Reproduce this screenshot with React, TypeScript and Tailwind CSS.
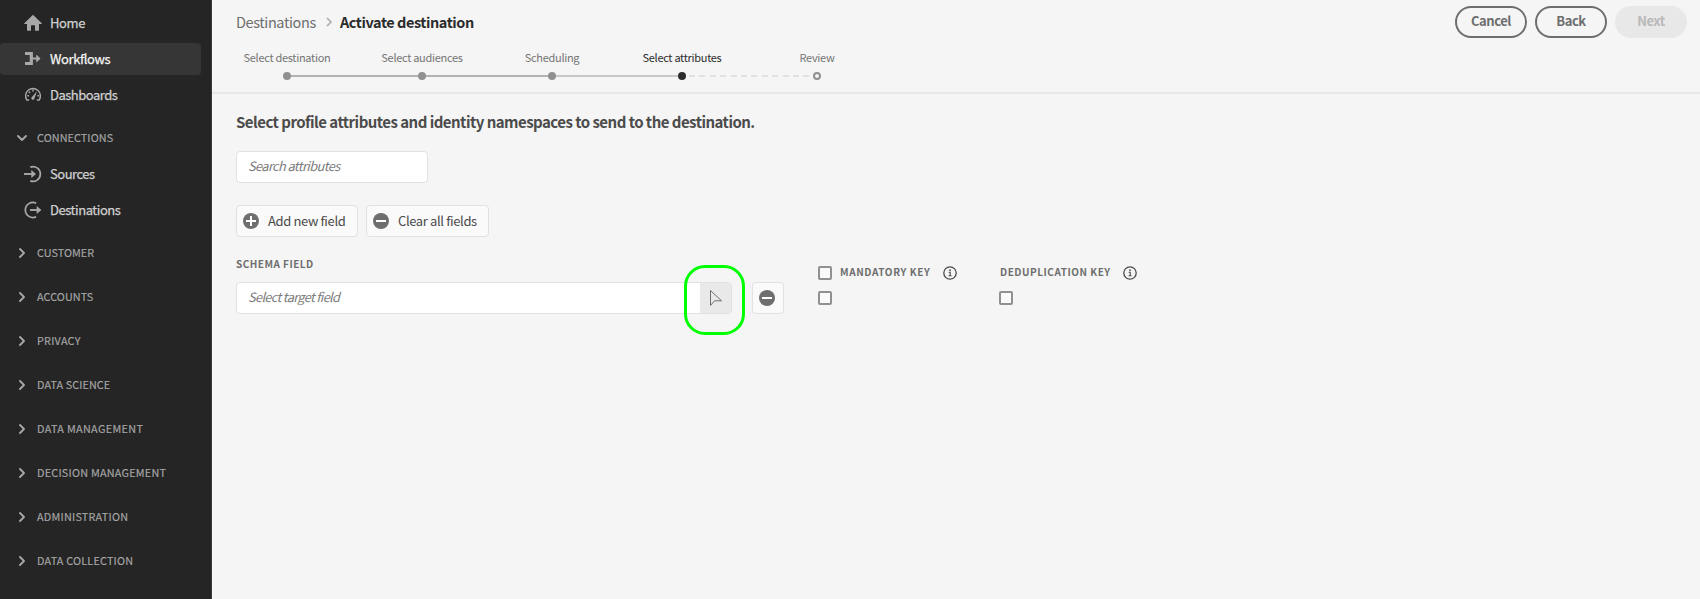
import type { ReactNode } from "react";

const HomeIcon = () => (
  <svg width="18" height="18" viewBox="0 0 18 18" fill="currentColor">
    <path d="M17.7 9.2 9.5 1.3a.7.7 0 0 0-1 0L.3 9.2a.4.4 0 0 0 .3.7H3v6.4c0 .3.2.5.5.5H7v-5c0-.3.2-.5.5-.5h3c.3 0 .5.2.5.5v5h3.500c.3 0 .5-.2.5-.5V9.900h2.400a.4.4 0 0 0 .3-.7z" />
  </svg>
);

const WorkflowIcon = () => (
  <svg width="18" height="18" viewBox="0 0 18 18" fill="currentColor">
    <path d="M1 2h7.900v5.600h3.300V5.400c0-.4.400-.6.700-.3l3.300 3.100c.2.200.2.500 0 .700l-3.300 3.100c-.3.300-.7.100-.7-.3V9.500H8.900v5.500H1v-3.100h4.700V5.100H1z" />
  </svg>
);

const DashboardIcon = () => (
  <svg width="18" height="18" viewBox="0 0 18 18" fill="none" stroke="currentColor">
    <path d="M2.700 13.800A7.400 7.400 0 1 1 15.300 13.800" strokeWidth="1.400" />
    <path d="M2.200 14h3M12.800 14h3" strokeWidth="1.400" />
    <path d="M3.300 9.700h1.700M13.400 9.700h1.700M9 3.600v1.800M4.800 5.700l1.300 1.200" strokeWidth="1.500" />
    <path d="M13.100 5.100 10.500 12.200a1.600 1.600 0 1 1-2.500-1.300z" fill="currentColor" stroke="none" />
  </svg>
);

const SourcesIcon = () => (
  <svg width="18" height="18" viewBox="0 0 18 18" fill="none" stroke="currentColor">
    <path d="M6.300 2.100A7.400 7.400 0 1 1 6.300 15.900" strokeWidth="1.700" />
    <path d="M0 9h8" strokeWidth="1.900" />
    <path d="M7.300 5v8l4.700-4z" fill="currentColor" stroke="none" />
  </svg>
);

const DestinationsIcon = () => (
  <svg width="18" height="18" viewBox="0 0 18 18" fill="none" stroke="currentColor">
    <path d="M12.200 2.300A7.500 7.500 0 1 0 12.200 15.700" strokeWidth="1.700" />
    <path d="M6 9h8" strokeWidth="1.900" />
    <path d="M12.700 5v8l4.700-4z" fill="currentColor" stroke="none" />
  </svg>
);

const Chevron = ({ down = false }: { down?: boolean }) => (
  <svg width="12" height="12" viewBox="0 0 12 12" fill="none" stroke="currentColor" strokeWidth="1.900" strokeLinecap="round" strokeLinejoin="round">
    <path d={down ? "M2 4l4 4 4-4" : "M4 2l4 4-4 4"} />
  </svg>
);

const CircleSign = ({ plus = false }: { plus?: boolean }) => (
  <svg className="shrink-0" width="16" height="16" viewBox="0 0 16 16">
    <circle cx="8" cy="8" r="8" fill="#6e6e6e" />
    <path d={plus ? "M3 8h10M8 3v10" : "M3 8h10"} stroke="#fff" strokeWidth="2" />
  </svg>
);

const InfoIcon = () => (
  <svg width="14" height="14" viewBox="0 0 14 14" fill="none" stroke="#4b4b4b">
    <circle cx="7" cy="7" r="6.200" strokeWidth="1.300" />
    <path d="M5.700 6.300h1.500v3.200M5.600 9.700h2.900" strokeWidth="1.100" />
    <circle cx="7" cy="4.200" r=".9" fill="#4b4b4b" stroke="none" />
  </svg>
);

const Checkbox = () => <span className="block size-3.5 shrink-0 rounded-[2px] border-2 border-[#909090] bg-[#fafafa]" />;

function NavItem({ icon, label, active = false, track }: { icon: ReactNode; label: string; active?: boolean; track: string }) {
  return (
    <a className={`flex h-8 w-[201px] items-center gap-2 pl-6 ${active ? "rounded bg-[#363636]" : ""}`}>
      <span className="text-[#a8a8a8]">{icon}</span>
      <span className={`whitespace-nowrap text-[13px] leading-5 [-webkit-text-stroke:0.25px] ${track} ${active ? "text-[#f5f5f5]" : "text-[#d0d0d0]"}`}>{label}</span>
    </a>
  );
}

function Section({ label, track, down = false }: { label: string; track: string; down?: boolean }) {
  return (
    <div className="flex h-11 items-center gap-[9px] pl-4 text-[#a6a6a6]">
      <Chevron down={down} />
      <span className={`whitespace-nowrap pb-0.5 text-[10.8px] leading-4 [-webkit-text-stroke:0.15px] ${track}`}>{label}</span>
    </div>
  );
}

const sections = [
  { label: "CUSTOMER", track: "tracking-[0.05px]" },
  { label: "ACCOUNTS", track: "tracking-[0.1px]" },
  { label: "PRIVACY", track: "tracking-[0.25px]" },
  { label: "DATA SCIENCE", track: "tracking-[0.1px]" },
  { label: "DATA MANAGEMENT", track: "tracking-[0.35px]" },
  { label: "DECISION MANAGEMENT", track: "tracking-[0.25px]" },
  { label: "ADMINISTRATION", track: "tracking-[0.25px]" },
  { label: "DATA COLLECTION", track: "tracking-[0.22px]" },
];

function Step({ label, width, dot, current = false }: { label: string; width: string; dot: string; current?: boolean }) {
  return (
    <div className={`flex shrink-0 flex-col items-center ${width}`}>
      <span className={`whitespace-nowrap text-[11px] leading-4 tracking-[-0.3px] ${current ? "text-[#2c2c2c]" : "text-[#747474]"}`}>{label}</span>
      <span className={`mt-[7px] size-2 rounded-full ${dot}`} />
    </div>
  );
}

export default function App() {
  return (
    <div className="flex h-[599px] w-[1700px] overflow-hidden bg-[#f5f5f5] font-['Noto_Sans_CJK_SC','Noto_Sans',sans-serif]">
      <nav className="w-[212px] shrink-0 border-r border-[#3a3a3a] bg-[#252525] pt-[7px]">
        <div className="flex flex-col gap-1">
          <NavItem icon={<HomeIcon />} label="Home" track="tracking-[-0.4px]" />
          <NavItem icon={<WorkflowIcon />} label="Workflows" active track="tracking-[-0.4px]" />
          <NavItem icon={<DashboardIcon />} label="Dashboards" track="tracking-[-0.5px]" />
        </div>
        <div className="mt-[5px]">
          <Section label="CONNECTIONS" track="tracking-[0.1px]" down />
        </div>
        <div className="mt-[-2px] flex flex-col gap-1">
          <NavItem icon={<SourcesIcon />} label="Sources" track="tracking-[-0.5px]" />
          <NavItem icon={<DestinationsIcon />} label="Destinations" track="tracking-[-0.45px]" />
        </div>
        <div className="mt-[5px]">
          {sections.map((s) => (
            <Section key={s.label} {...s} />
          ))}
        </div>
      </nav>

      <main className="flex-1">
        <header className="flex h-[94px] justify-between border-b-2 border-[#e8e8e8] pr-[13px] pt-[6px]">
          <div>
            <div className="flex h-8 items-center pl-6 leading-6">
              <span className="w-[80px] whitespace-nowrap text-[14.5px] tracking-[-0.4px] text-[#6e6e6e]">Destinations</span>
              <svg className="ml-[9px] mr-[7px]" width="8" height="10" viewBox="0 0 8 10" fill="none" stroke="#aaa" strokeWidth="1.600">
                <path d="M2 1l4 4-4 4" />
              </svg>
              <span className="whitespace-nowrap text-[14.5px] font-bold tracking-[-0.45px] text-[#2c2c2c]">Activate destination</span>
            </div>
            <div className="mt-[11px] flex items-end pl-[31px]">
              <Step label="Select destination" width="w-[88px]" dot="bg-[#909090]" />
              <span className="mb-[3px] ml-[-40px] h-0.5 w-[127px] bg-[#b3b3b3]" />
              <Step label="Select audiences" width="w-[88px] -ml-10" dot="bg-[#909090]" />
              <span className="mb-[3px] ml-[-40px] h-0.5 w-[122px] bg-[#b3b3b3]" />
              <Step label="Scheduling" width="w-[88px] -ml-10" dot="bg-[#909090]" />
              <span className="mb-[3px] ml-[-40px] h-0.5 w-[122px] bg-[#c8c8c8]" />
              <Step label="Select attributes" width="w-[88px] -ml-10" dot="bg-[#2c2c2c]" current />
              <span className="mb-[3px] ml-[-37px] h-0.5 w-[121px] bg-[repeating-linear-gradient(90deg,#e1e1e1_0_6px,transparent_6px_10.400px)]" />
              <Step label="Review" width="w-[88px] -ml-[37px]" dot="border-2 border-[#909090]" />
            </div>
          </div>
          <div className="flex gap-2 text-[13px] font-bold tracking-[-0.45px]">
            <button className="h-8 w-[72px] rounded-full border-2 border-[#6e6e6e] pb-0.5 text-[#6e6e6e]">Cancel</button>
            <button className="h-8 w-[72px] rounded-full border-2 border-[#6e6e6e] pb-0.5 text-[#6e6e6e]">Back</button>
            <button className="h-8 w-[72px] rounded-full bg-[#e8e8e8] pb-0.5 text-[#b8b8b8]">Next</button>
          </div>
        </header>

        <div className="pl-6 pt-4">
          <h1 className="h-6 whitespace-nowrap text-[15px] font-bold leading-6 tracking-[-0.53px] text-[#4b4b4b]">
            Select profile attributes and identity namespaces to send to the destination.
          </h1>
          <div className="mt-[17px] flex h-8 w-48 items-center rounded border border-[#e1e1e1] bg-white pb-0.5 pl-[11px] text-[12.8px] italic leading-5 tracking-[-0.61px] text-[#7c7c7c]">
            Search attributes
          </div>
          <div className="mt-[22px] flex gap-2 text-[13px] leading-5 tracking-[-0.37px] text-[#4b4b4b]">
            <button className="flex h-8 w-[122px] items-center gap-[9px] whitespace-nowrap rounded border border-[#e1e1e1] bg-[#fafafa] pb-px pl-1.5">
              <CircleSign plus />
              Add new field
            </button>
            <button className="flex h-8 w-[123px] items-center gap-[9px] whitespace-nowrap rounded border border-[#e1e1e1] bg-[#fafafa] pb-px pl-1.5">
              <CircleSign />
              Clear all fields
            </button>
          </div>
          <div className="flex text-[10px] font-bold text-[#6e6e6e]">
            <div className="w-[582px]">
              <div className="mt-[19px] h-4 leading-4 tracking-[0.48px]">SCHEMA FIELD</div>
              <div className="mt-[10px] flex gap-5">
                <div className="relative flex h-8 w-[496px] items-center justify-between rounded border border-[#e1e1e1] bg-white pl-[11px] text-[12.8px] font-normal italic tracking-[-0.67px] text-[#7c7c7c]">
                  <span className="pb-0.5 leading-5">Select target field</span>
                  <button className="flex h-full w-[31px] items-center justify-center rounded-r-[3px] bg-[#e9e9e9]">
                    <svg width="14" height="18" viewBox="0 0 14 18" fill="none" stroke="#6e6e6e" strokeWidth="1">
                      <path d="M1.500 1.500v15l4-4.700h7z" />
                    </svg>
                  </button>
                  <span className="absolute -top-[18px] left-[447px] h-[70px] w-[61px] rounded-[21px] border-[3px] border-[#00ff00]" />
                </div>
                <button className="flex size-8 items-center justify-center rounded border border-[#e1e1e1] bg-[#fafafa] pr-0.5">
                  <CircleSign />
                </button>
              </div>
            </div>
            <div className="w-[181px] pt-7">
              <div className="flex h-4 items-center">
                <Checkbox />
                <span className="ml-2 w-[103px] whitespace-nowrap pb-0.5 leading-4 tracking-[0.63px]">MANDATORY KEY</span>
                <InfoIcon />
              </div>
              <div className="mt-[10px]">
                <Checkbox />
              </div>
            </div>
            <div className="pt-7">
              <div className="flex h-4 items-center pb-px">
                <span className="ml-px w-[123px] whitespace-nowrap pb-px leading-4 tracking-[0.53px]">DEDUPLICATION KEY</span>
                <InfoIcon />
              </div>
              <div className="mt-[10px]">
                <Checkbox />
              </div>
            </div>
          </div>
        </div>
      </main>
    </div>
  );
}
